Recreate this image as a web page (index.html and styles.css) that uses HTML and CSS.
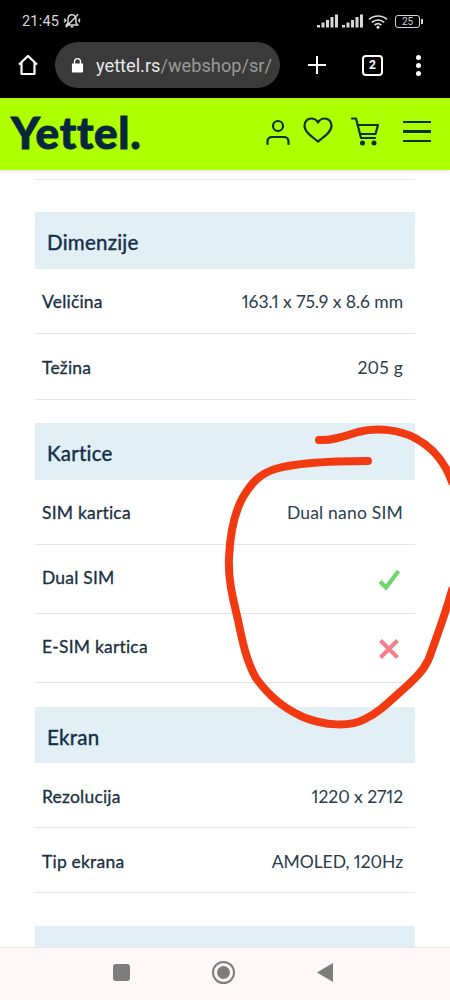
FILE: index.html
```html
<!DOCTYPE html>
<html lang="sr">
<head>
<meta charset="utf-8">
<title>Yettel</title>
<link rel="stylesheet" href="styles.css">
</head>
<body>
<div class="screen">
  <div class="system">
    <div class="status">
      <div class="status-left">
        <span class="time">21:45</span>
        <svg class="i-mute" viewBox="0 0 16 16"><path d="M8 2.500c-2.400 0-3.500 1.800-3.500 4v3L3 11.500h10L11.500 9.500v-3C11.500 4.300 10.400 2.500 8 2.500zM6.800 13.200h2.400M2.500 13.500L13.500 2M1 6l1.500 1.500L1 9M15 6l-1 1.500 1 1.500" fill="none" stroke="#d8d8d8" stroke-width="1.300"/></svg>
      </div>
      <div class="status-right">
        <svg class="i-signal" viewBox="0 0 21 14"><path d="M0 11h3v2.500H0zM4.500 8.500h3v5h-3zM9 6h3v7.500H9zM13.500 3h3v10.500h-3zM18 .5h3v13h-3z" fill="#d8d8d8"/></svg>
        <svg class="i-signal" viewBox="0 0 21 14"><path d="M0 11h3v2.500H0zM4.500 8.500h3v5h-3zM9 6h3v7.500H9zM13.500 3h3v10.500h-3zM18 .5h3v13h-3z" fill="#d8d8d8"/></svg>
        <svg class="i-wifi" viewBox="0 0 20 15"><path d="M1 5.500c5-4.700 13-4.700 18 0M3.800 8.300c3.500-3.100 8.900-3.100 12.400 0M6.600 11c1.900-1.500 4.900-1.500 6.800 0" fill="none" stroke="#e0e0e0" stroke-width="1.700"/><circle cx="10" cy="13.300" r="1.500" fill="#e0e0e0"/></svg>
        <div class="battery"><span class="battery-text">25</span></div><span class="battery-tip"></span>
      </div>
    </div>
    <div class="browser">
      <svg class="i-home" viewBox="0 0 24 24"><path d="M3 11.500L12 3l9 8.500M5.500 9.500V21h13V9.500" fill="none" stroke="#fff" stroke-width="2.200" stroke-linejoin="round"/></svg>
      <div class="url">
        <svg class="i-lock" viewBox="0 0 14 16"><path d="M1 6.500h12V15a1 1 0 0 1-1 1H2a1 1 0 0 1-1-1z" fill="#fff"/><path d="M3.800 7V4.300a3.200 3.200 0 0 1 6.400 0V7" fill="none" stroke="#fff" stroke-width="1.500"/></svg>
        <span class="url-text"><span class="url-host">yettel.rs</span>/webshop/sr/</span>
      </div>
      <svg class="i-plus" viewBox="0 0 20 20"><path d="M10 1v18M1 10h18" stroke="#fff" stroke-width="2"/></svg>
      <div class="tabs">2</div>
      <div class="dots"><span></span><span></span><span></span></div>
    </div>
  </div>

  <header class="brand">
    <span class="logo">Yettel.</span>
    <div class="brand-icons">
      <svg class="i-user" viewBox="0 0 24 26"><circle cx="12" cy="7" r="5" fill="none" stroke="#06333a" stroke-width="2.200"/><path d="M1.500 25v-2.500c0-3 2-4.500 5-4.500h11c3 0 5 1.500 5 4.500V25" fill="none" stroke="#06333a" stroke-width="2.200" stroke-linecap="round"/></svg>
      <svg class="i-heart" viewBox="0 0 30 26"><path d="M15 24.500C9 20 1.500 15 1.500 8.500 1.500 4.500 4.500 1.500 8.300 1.500c3 0 5.300 1.500 6.700 4 1.400-2.500 3.700-4 6.700-4 3.800 0 6.800 3 6.800 7 0 6.500-7.500 11.500-13.500 16z" fill="none" stroke="#06333a" stroke-width="2.200" stroke-linejoin="round"/></svg>
      <svg class="i-cart" viewBox="0 0 28 29"><path d="M1 1.500h4L10 21h14M6.500 8H27l-2.500 9H9" fill="none" stroke="#06333a" stroke-width="2.200" stroke-linecap="round" stroke-linejoin="round"/><circle cx="11.500" cy="26" r="2.500" fill="#06333a"/><circle cx="23" cy="26" r="2.500" fill="#06333a"/></svg>
      <div class="burger"><span></span><span></span><span></span></div>
    </div>
  </header>

  <main class="content">
    <div class="top-rule"></div>

    <section class="spec">
      <h2 class="spec-title">Dimenzije</h2>
      <div class="row"><span class="label">Veličina</span><span class="value value-num">163.1 x 75.9 x 8.6 mm</span></div>
      <div class="row row-last"><span class="label">Težina</span><span class="value">205 g</span></div>
    </section>

    <section class="spec spec-sim">
      <h2 class="spec-title">Kartice</h2>
      <div class="row"><span class="label">SIM kartica</span><span class="value">Dual nano SIM</span></div>
      <div class="row row-tall"><span class="label">Dual SIM</span>
        <svg class="i-mark" viewBox="0 0 24 24"><path d="M3 13.500l6 6L21.500 3" fill="none" stroke="#6fd66d" stroke-width="4.200"/></svg>
      </div>
      <div class="row row-tall"><span class="label">E-SIM kartica</span>
        <svg class="i-mark" viewBox="0 0 24 24"><path d="M3.500 3.500l17 17M20.500 3.500l-17 17" fill="none" stroke="#f2808a" stroke-width="4.200"/></svg>
      </div>
    </section>

    <section class="spec spec-screen">
      <h2 class="spec-title">Ekran</h2>
      <div class="row"><span class="label">Rezolucija</span><span class="value value-num">1220 x 2712</span></div>
      <div class="row"><span class="label">Tip ekrana</span><span class="value value-num">AMOLED, 120Hz</span></div>
    </section>

    <div class="next-head"></div>
  </main>

  <svg class="scribble" viewBox="0 0 450 1000"><path d="M319 440C332 441 345 436 358 432C378 427 400 430 415 438C432 447 445 462 452 482M452 590C447 608 440 628 432 650C428 664 422 672 408 685C392 699 380 712 365 719C350 727 325 726 303 717C285 709 268 695 256 678C247 662 243 645 238 620C232 595 228 578 229 558C230 535 233 515 243 497C252 482 260 474 275 469C295 463 325 461 368 461" fill="none" stroke="#f23a12" stroke-width="8" stroke-linecap="round" stroke-linejoin="round"/></svg>

  <nav class="android-nav">
    <span class="nav-square"></span>
    <span class="nav-circle"><span class="nav-dot"></span></span>
    <svg class="nav-back" viewBox="0 0 16 19"><path d="M16 0v19L0 9.500z" fill="#7d7d7d"/></svg>
  </nav>
</div>
</body>
</html>
```
FILE: styles.css
```css
* { box-sizing: border-box; }
html, body { margin: 0; padding: 0; }
body { width: 450px; height: 1000px; overflow: hidden; background: #fff; font-family: "Lato", "Liberation Sans", sans-serif; }
.screen { position: relative; width: 450px; height: 1000px; overflow: hidden; display: flex; flex-direction: column; }

.system { background: #000; height: 98px; flex: none; }
.status { height: 42px; display: flex; justify-content: space-between; align-items: center; padding: 0 27px 0 22px; }
.status-left { display: flex; align-items: center; gap: 4px; }
.time { font: 400 14.500px "Roboto", sans-serif; color: #d8d8d8; letter-spacing: .2px; }
.i-mute { width: 18px; height: 18px; }
.status-right { display: flex; align-items: center; }
.i-signal { width: 21px; height: 14px; margin-right: 4px; }
.i-wifi { width: 20px; height: 15px; margin: 0 7px 0 1px; }
.battery { width: 25px; height: 13px; border: 1.200px solid #d8d8d8; border-radius: 3px; display: flex; align-items: center; justify-content: center; }
.battery-text { font: 400 10px "Roboto", sans-serif; color: #cfcfcf; }
.battery-tip { width: 2px; height: 5px; background: #d8d8d8; margin-left: 1px; }

.browser { height: 46px; display: flex; align-items: center; padding-left: 16px; }
.i-home { width: 24px; height: 24px; flex: none; }
.url { width: 225px; height: 46px; margin-left: 15px; background: #3a3a3a; border-radius: 23px; display: flex; align-items: center; padding-left: 16px; overflow: hidden; flex: none; }
.i-lock { width: 13px; height: 16px; flex: none; }
.url-text { margin-left: 12px; font: 400 18.200px "Roboto", sans-serif; color: #9a9a9a; white-space: nowrap; }
.url-host { color: #e8e8e8; }
.i-plus { width: 20px; height: 20px; margin-left: 27px; flex: none; }
.tabs { width: 21px; height: 21px; margin-left: 35px; border: 2px solid #fff; border-radius: 4px; color: #fff; font: 700 12px "Roboto", sans-serif; display: flex; align-items: center; justify-content: center; flex: none; }
.dots { margin-left: 33px; display: flex; flex-direction: column; gap: 3px; }
.dots span { width: 5px; height: 5px; border-radius: 50%; background: #fff; display: block; }

.brand { height: 72px; flex: none; background: #aeff00; display: flex; align-items: center; justify-content: space-between; padding: 0 19px 5px 11px; box-shadow: 0 1px 4px rgba(0,0,0,.12); position: relative; z-index: 1; }
.logo { font: 900 44px "Lato", sans-serif; color: #06283d; letter-spacing: .7px; line-height: 1; -webkit-text-stroke: .9px #06283d; }
.brand-icons { display: flex; align-items: center; }
.i-user { width: 24px; height: 26px; }
.i-heart { width: 30px; height: 26px; margin-left: 13px; margin-top: -4px; }
.i-cart { width: 28px; height: 29px; margin-left: 18px; }
.burger { margin-left: 24px; display: flex; flex-direction: column; gap: 7px; }
.burger span { display: block; width: 28px; height: 2.500px; background: #06333a; }

.content { flex: 1; padding: 0 35px; min-height: 0; overflow: hidden; }
.top-rule { height: 10px; border-bottom: 1px solid #ececec; margin-bottom: 32px; }
.spec { margin-bottom: 23px; }
.spec-sim { margin-bottom: 24px; }
.spec-title { margin: 0; height: 57px; background: #e2eff4; display: flex; align-items: center; padding: 3px 0 0 12px; font: 400 20.500px "Lato", sans-serif; -webkit-text-stroke: .4px #12304a; color: #12304a; letter-spacing: .25px; }
.spec-screen .spec-title { height: 56px; }
.row { height: 65px; display: flex; align-items: center; justify-content: space-between; padding: 1px 12px 0 7px; border-bottom: 1px solid #e4e4e4; }
.spec-screen .row { padding-top: 2px; }
.row-last { height: 66px; }
.row-tall { height: 69px; }
.row-tall .label { margin-bottom: 4px; }
.label { font: 400 17.500px "Lato", sans-serif; -webkit-text-stroke: .3px #1a2f42; color: #1a2f42; letter-spacing: .2px; }
.value { font: 400 17.500px "Lato", sans-serif; color: #2a3c4e; letter-spacing: .2px; font-variant-numeric: proportional-nums; }
.value-num { letter-spacing: -.05px; }
.i-mark { width: 24px; height: 24px; margin-right: 2px; }
.next-head { height: 40px; background: #e2eff4; margin-top: 33px; }

.scribble { position: absolute; left: 0; top: 0; width: 450px; height: 1000px; pointer-events: none; z-index: 2; }

.android-nav { position: absolute; left: 0; bottom: 0; width: 450px; height: 53px; background: #fdf8f7; border-top: 1px solid #eee6e3; display: flex; align-items: center; padding-bottom: 3px; z-index: 3; }
.nav-square { width: 17px; height: 17px; margin-left: 113px; background: #7d7d7d; border-radius: 3px; }
.nav-circle { width: 23px; height: 23px; margin-left: 82px; border: 2px solid #7d7d7d; border-radius: 50%; display: flex; align-items: center; justify-content: center; }
.nav-dot { width: 13px; height: 13px; background: #7d7d7d; border-radius: 50%; }
.nav-back { width: 16px; height: 19px; margin-left: 82px; }
```
